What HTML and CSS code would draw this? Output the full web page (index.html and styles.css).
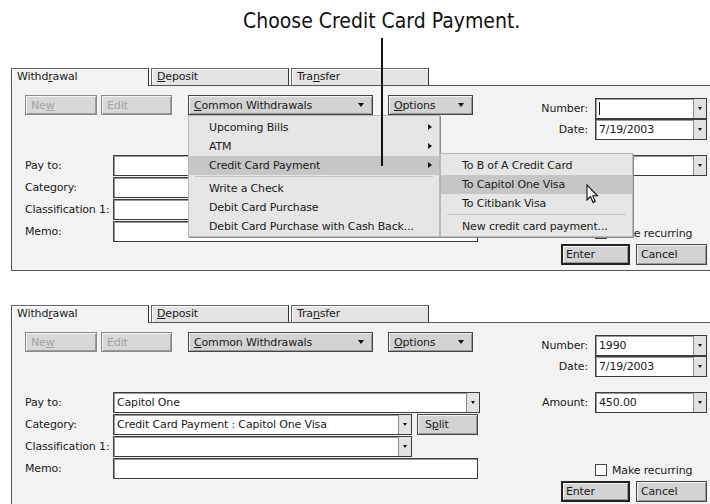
FILE: index.html
```html
<!DOCTYPE html>
<html>
  <head>
    <meta charset="UTF-8">
    <title>Common Withdrawals</title>
    <link rel="stylesheet" href="styles.css">
  </head>
  <body>
    <div class="figure">
      <div class="caption">Choose Credit Card Payment.</div>
      <div class="pointer-line"></div>

      <!-- Janela de cima: menu aberto -->
      <div class="panel">
        <div class="tabs">
          <div class="tab active">Withd<u>r</u>awal</div>
          <div class="tab"><u>D</u>eposit</div>
          <div class="tab">Tra<u>n</u>sfer</div>
        </div>
        <div class="panel-body">
          <div class="left-col">
            <div class="toolbar">
              <div class="btn disabled btn-new">Ne<u>w</u></div>
              <div class="btn disabled btn-edit">Edit</div>
              <div class="btn drop btn-common"><span><u>C</u>ommon Withdrawals</span><i class="tri"></i></div>
              <div class="btn drop btn-options"><span><u>O</u>ptions</span><i class="tri"></i></div>
            </div>
            <div class="fields">
              <div class="frow">
                <span class="flabel">Pay to:</span>
                <div class="combo w-payto"><span class="combo-text"></span><span class="combo-arrow"><i class="tri"></i></span></div>
              </div>
              <div class="frow">
                <span class="flabel">Category:</span>
                <div class="combo w-cat"><span class="combo-text"></span><span class="combo-arrow"><i class="tri"></i></span></div>
                <div class="btn btn-split covered">S<u>p</u>lit</div>
              </div>
              <div class="frow">
                <span class="flabel">Classification 1:</span>
                <div class="combo w-cat"><span class="combo-text"></span><span class="combo-arrow"><i class="tri"></i></span></div>
              </div>
              <div class="frow">
                <span class="flabel">Memo:</span>
                <div class="textbox w-memo"></div>
              </div>
            </div>
          </div>
          <div class="right-col">
            <div class="rrow">
              <span class="rlabel">Number:</span>
              <div class="combo w-right"><span class="combo-text"><i class="caret"></i></span><span class="combo-arrow"><i class="tri"></i></span></div>
            </div>
            <div class="rrow">
              <span class="rlabel">Date:</span>
              <div class="combo w-right"><span class="combo-text">7/19/2003</span><span class="combo-arrow"><i class="tri"></i></span></div>
            </div>
            <div class="rrow amount-row">
              <span class="rlabel covered">Amount:</span>
              <div class="combo w-right"><span class="combo-text"></span><span class="combo-arrow"><i class="tri"></i></span></div>
            </div>
            <div class="check-row"><span class="checkbox"></span>Make recurring</div>
            <div class="actions">
              <div class="btn btn-enter">Enter</div>
              <div class="btn btn-cancel">Cancel</div>
            </div>
          </div>
        </div>
      </div>

      <!-- Janela de baixo: depois da escolha -->
      <div class="panel">
        <div class="tabs">
          <div class="tab active">Withd<u>r</u>awal</div>
          <div class="tab"><u>D</u>eposit</div>
          <div class="tab">Tra<u>n</u>sfer</div>
        </div>
        <div class="panel-body">
          <div class="left-col">
            <div class="toolbar">
              <div class="btn disabled btn-new">Ne<u>w</u></div>
              <div class="btn disabled btn-edit">Edit</div>
              <div class="btn drop btn-common"><span><u>C</u>ommon Withdrawals</span><i class="tri"></i></div>
              <div class="btn drop btn-options"><span><u>O</u>ptions</span><i class="tri"></i></div>
            </div>
            <div class="fields">
              <div class="frow">
                <span class="flabel">Pay to:</span>
                <div class="combo w-payto"><span class="combo-text">Capitol One</span><span class="combo-arrow"><i class="tri"></i></span></div>
              </div>
              <div class="frow">
                <span class="flabel">Category:</span>
                <div class="combo w-cat"><span class="combo-text">Credit Card Payment : Capitol One Visa</span><span class="combo-arrow"><i class="tri"></i></span></div>
                <div class="btn btn-split">S<u>p</u>lit</div>
              </div>
              <div class="frow">
                <span class="flabel">Classification 1:</span>
                <div class="combo w-cat"><span class="combo-text"></span><span class="combo-arrow"><i class="tri"></i></span></div>
              </div>
              <div class="frow">
                <span class="flabel">Memo:</span>
                <div class="textbox w-memo"></div>
              </div>
            </div>
          </div>
          <div class="right-col">
            <div class="rrow">
              <span class="rlabel">Number:</span>
              <div class="combo w-right"><span class="combo-text">1990</span><span class="combo-arrow"><i class="tri"></i></span></div>
            </div>
            <div class="rrow">
              <span class="rlabel">Date:</span>
              <div class="combo w-right"><span class="combo-text">7/19/2003</span><span class="combo-arrow"><i class="tri"></i></span></div>
            </div>
            <div class="rrow amount-row">
              <span class="rlabel">Amount:</span>
              <div class="combo w-right"><span class="combo-text">450.00</span><span class="combo-arrow"><i class="tri"></i></span></div>
            </div>
            <div class="check-row"><span class="checkbox"></span>Make recurring</div>
            <div class="actions">
              <div class="btn btn-enter">Enter</div>
              <div class="btn btn-cancel">Cancel</div>
            </div>
          </div>
        </div>
      </div>

      <!-- Menu Common Withdrawals aberto -->
      <div class="menu menu-main">
        <div class="mi">Upcoming Bills<i class="sub-arrow"></i></div>
        <div class="mi">ATM<i class="sub-arrow"></i></div>
        <div class="mi hot">Credit Card Payment<i class="sub-arrow"></i></div>
        <div class="menu-sep"></div>
        <div class="mi">Write a Check</div>
        <div class="mi">Debit Card Purchase</div>
        <div class="mi">Debit Card Purchase with Cash Back...</div>
      </div>
      <div class="menu menu-sub">
        <div class="mi">To B of A Credit Card</div>
        <div class="mi hot">To Capitol One Visa</div>
        <div class="mi">To Citibank Visa</div>
        <div class="menu-sep"></div>
        <div class="mi">New credit card payment...</div>
      </div>

      <svg class="cursor" width="14" height="22" viewBox="0 0 14 22">
        <path d="M1 1 L1 16 L4.5 12.5 L7 18.5 L9.2 17.6 L6.8 11.8 L11.5 11.8 Z" fill="#fff" stroke="#111" stroke-width="1.1" stroke-linejoin="miter"/>
      </svg>
    </div>
  </body>
</html>
```

FILE: styles.css
```css
/* Figura inteira */
* {
  box-sizing: border-box;
}

body {
  margin: 0;
  background: #fff;
  font-family: "DejaVu Sans", Verdana, sans-serif;
  font-size: 11px;
  letter-spacing: -0.15px;
  color: #1a1a1a;
  overflow: hidden;
}

u {
  text-decoration: underline;
  text-underline-offset: 1px;
}

.figure {
  position: relative;
  width: 710px;
  height: 504px;
  overflow: hidden;
}

.caption {
  height: 68px;
  padding: 9px 0 0 243px;
  font-family: "Liberation Sans Narrow", "DejaVu Sans Condensed", sans-serif;
  font-size: 21px;
  line-height: 24px;
  letter-spacing: 0;
  color: #111;
}

.pointer-line {
  position: absolute;
  left: 381px;
  top: 38px;
  width: 2px;
  height: 128px;
  background: #111;
  z-index: 5;
}

/* Janela com abas */
.panel {
  width: 730px;
  margin-left: 11px;
  margin-bottom: 34px;
}

.tabs {
  display: flex;
  height: 18px;
  border-bottom: 1px solid #555;
}

.tab {
  width: 138px;
  height: 17px;
  margin-right: 2px;
  padding: 1px 0 0 5px;
  line-height: 14px;
  border: 1px solid #666;
  border-bottom: none;
  border-right-color: #333;
  background: #e4e4e4;
  box-shadow: inset 1px 1px 0 #fff;
}

.tab.active {
  height: 18px;
  background: #f3f3f3;
  border-left-color: #555;
}

.panel-body {
  display: flex;
  padding: 9px 0 5px 13px;
  background: #f3f3f3;
  border: 1px solid #555;
  border-top: none;
}

.left-col {
  width: 455px;
}

.right-col {
  width: 227px;
  padding-top: 3px;
}

/* partes escondidas atras do submenu */
.covered {
  visibility: hidden;
}

/* Botoes */
.btn {
  display: flex;
  align-items: center;
  height: 20px;
  padding: 0 5px;
  border: 1px solid #444;
  background: #d3d3d3;
  box-shadow: inset 1px 1px 0 #f4f4f4, inset -1px -1px 0 #9a9a9a;
  color: #1a1a1a;
}

.btn.disabled {
  border-color: #8a8a8a;
  color: #a3a3a3;
  background: #d8d8d8;
}

.btn.drop {
  justify-content: space-between;
  padding-right: 8px;
}

.toolbar {
  display: flex;
  height: 20px;
}

.btn-new {
  width: 72px;
  margin-right: 4px;
}

.btn-edit {
  width: 71px;
  margin-right: 16px;
}

.btn-common {
  width: 185px;
  margin-right: 15px;
}

.btn-options {
  width: 85px;
}

.btn-split {
  width: 61px;
  height: 21px;
  margin-left: 5px;
  padding-left: 7px;
}

.tri {
  display: block;
  width: 0;
  height: 0;
  border-left: 3.5px solid transparent;
  border-right: 3.5px solid transparent;
  border-top: 4px solid #111;
}

/* Campos */
.fields {
  margin-top: 40px;
}

.frow {
  display: flex;
  align-items: center;
  height: 21px;
  margin-bottom: 1px;
}

.flabel {
  width: 88px;
}

.combo, .textbox {
  display: flex;
  height: 21px;
  background: #fff;
  border: 1px solid #3c3c3c;
  box-shadow: inset 1px 1px 0 #9a9a9a;
}

.combo-text {
  flex: 1;
  display: flex;
  align-items: center;
  padding-left: 3px;
  white-space: nowrap;
  overflow: hidden;
}

.combo-arrow {
  width: 13px;
  display: flex;
  align-items: center;
  justify-content: center;
  background: #e2e2e2;
  border-left: 1px solid #8c8c8c;
}

.combo-arrow .tri {
  border-left-width: 2.5px;
  border-right-width: 2.5px;
  border-top-width: 3px;
}

.caret {
  display: block;
  width: 1px;
  height: 13px;
  background: #111;
}

.w-payto {
  width: 367px;
}

.w-cat {
  width: 299px;
}

.w-memo {
  width: 365px;
}

.w-right {
  width: 112px;
}

/* Coluna da direita */
.rrow {
  display: flex;
  align-items: center;
  height: 21px;
}

.rlabel {
  width: 115px;
  padding-right: 7px;
  text-align: right;
}

.amount-row {
  margin-top: 15px;
}

.check-row {
  display: flex;
  align-items: center;
  height: 12px;
  margin-top: 51px;
  padding-left: 115px;
}

.checkbox {
  width: 12px;
  height: 12px;
  margin-right: 5px;
  background: #fff;
  border: 1px solid #444;
}

.actions {
  display: flex;
  justify-content: flex-end;
  margin-top: 5px;
}

.btn-enter {
  width: 69px;
  height: 21px;
  margin-right: 6px;
  padding-left: 3px;
  border: 2px solid #222;
}

.btn-cancel {
  width: 71px;
  height: 21px;
  padding-left: 4px;
}

/* Menus suspensos */
.menu {
  position: absolute;
  padding-top: 2px;
  background: #e6e6e6;
  border: 1px solid #b8b8b8;
  box-shadow: 1px 1px 0 #8c8c8c;
  z-index: 3;
}

.menu-main {
  left: 188px;
  top: 115px;
  width: 252px;
}

.menu-sub {
  left: 440px;
  top: 153px;
  width: 193px;
  z-index: 4;
}

.menu-main .mi {
  padding-left: 20px;
}

.menu-sub .mi {
  padding-left: 21px;
}

.mi {
  position: relative;
  height: 19px;
  line-height: 19px;
  white-space: nowrap;
}

.mi.hot {
  background: #c6c6c6;
}

.menu-sep {
  height: 3px;
  margin: 0 6px;
  border-top: 1px solid #c4c4c4;
  margin-top: 1px;
}

.sub-arrow {
  position: absolute;
  right: 7px;
  top: 6px;
  width: 0;
  height: 0;
  border-top: 3.5px solid transparent;
  border-bottom: 3.5px solid transparent;
  border-left: 4px solid #111;
}

.cursor {
  position: absolute;
  left: 586px;
  top: 184px;
  z-index: 6;
}
```
